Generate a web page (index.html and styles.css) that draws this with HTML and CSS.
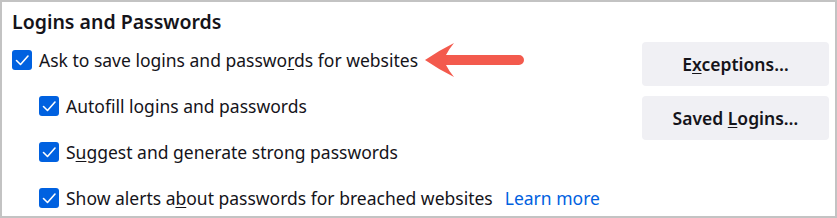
FILE: index.html
```html
<!DOCTYPE html>
<html>
<head>
<meta charset="utf-8">
<link rel="stylesheet" href="styles.css">
</head>
<body>
<div class="frame">
  <h2 class="title">Logins and Passwords</h2>
  <div class="content">
    <div class="options">
      <div class="row">
        <span class="cb"><svg viewBox="0 0 20 20"><polyline points="4.5,10.5 8.5,14.5 16,6"/></svg></span>
        <span class="label">Ask to save logins and passwo<u>r</u>ds for websites</span>
        <svg class="arrow" viewBox="0 0 101 36" width="101" height="36"><path d="M1 18 Q14 9 30 1 Q25 7 22 13 L95 13 A5 5 0 0 1 95 23 L22 23 Q25 29 30 35 Q14 27 1 18 Z"/></svg>
      </div>
      <div class="row sub">
        <span class="cb"><svg viewBox="0 0 20 20"><polyline points="4.5,10.5 8.5,14.5 16,6"/></svg></span>
        <span class="label">Autof<u>i</u>ll logins and passwords</span>
      </div>
      <div class="row sub">
        <span class="cb"><svg viewBox="0 0 20 20"><polyline points="4.5,10.5 8.5,14.5 16,6"/></svg></span>
        <span class="label">S<u>u</u>ggest and generate strong passwords</span>
      </div>
      <div class="row sub">
        <span class="cb"><svg viewBox="0 0 20 20"><polyline points="4.5,10.5 8.5,14.5 16,6"/></svg></span>
        <span class="label">Show alerts a<u>b</u>out passwords for breached websites</span>
        <a class="link" href="#">Learn more</a>
      </div>
    </div>
    <div class="buttons">
      <button class="btn">E<u>x</u>ceptions…</button>
      <button class="btn">Saved <u>L</u>ogins…</button>
    </div>
  </div>
</div>
</body>
</html>
```

FILE: styles.css
```css
html, body {
  margin: 0;
  padding: 0;
  background: #fff;
}
body {
  font-family: "Noto Sans", "Open Sans", sans-serif;
  color: #15141a;
  width: 837px;
  height: 218px;
}
.frame {
  box-sizing: border-box;
  width: 837px;
  height: 218px;
  border: 2px solid #c3c3c3;
  padding: 6px 6px 0 10px;
  overflow: hidden;
}
.title {
  margin: 0;
  font-size: 19.5px;
  font-weight: 600;
  line-height: 28px;
}
.content {
  display: flex;
  justify-content: space-between;
  margin-top: 6px;
}
.options {
  display: flex;
  flex-direction: column;
  gap: 26px;
  padding-top: 8px;
}
.row {
  display: flex;
  align-items: center;
  height: 20px;
  font-size: 17.5px;
}
.row.sub {
  padding-left: 27px;
}
.cb {
  width: 20px;
  height: 20px;
  border-radius: 3px;
  background: #0061e0;
  flex: none;
  display: flex;
}
.cb svg {
  width: 20px;
  height: 20px;
}
.cb polyline {
  fill: none;
  stroke: #fff;
  stroke-width: 1.6;
  stroke-linecap: round;
  stroke-linejoin: round;
}
.label {
  margin-left: 7px;
  white-space: nowrap;
}
u {
  text-decoration-thickness: 1px;
  text-underline-offset: 2px;
}
.arrow {
  margin-left: 6px;
  flex: none;
}
.arrow path {
  fill: #f35a4d;
}
.link {
  margin-left: 12px;
  color: #0061e0;
  text-decoration: none;
}
.buttons {
  display: flex;
  flex-direction: column;
  gap: 10px;
}
.btn {
  width: 187px;
  height: 44px;
  border: none;
  border-radius: 4px;
  background: #f0f0f4;
  color: #15141a;
  font-family: inherit;
  font-size: 17.5px;
  font-weight: 600;
  padding: 0;
}
```
